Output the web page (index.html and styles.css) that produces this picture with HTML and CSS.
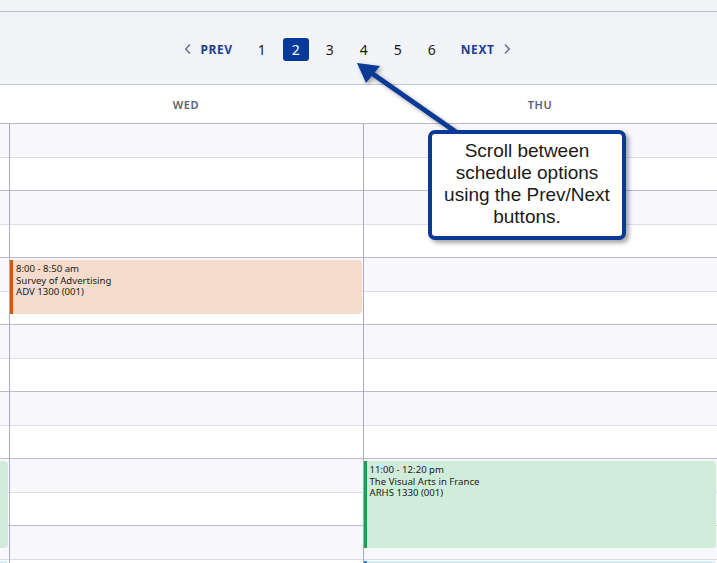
FILE: index.html
```html
<!DOCTYPE html>
<html lang="en">
<head>
    <meta charset="UTF-8">
    <meta name="viewport" content="width=device-width, initial-scale=1.0">
    <title>Schedule Options</title>
    <link rel="stylesheet" href="styles.css">
</head>
<body>
    <div class="top-strip"></div>

    <nav class="pager">
        <button class="pager-step">
            <svg width="8" height="12" viewBox="0 0 8 12"><path d="M6 1.5 1.8 6 6 10.5" fill="none" stroke="#6f7493" stroke-width="1.6"/></svg>
            PREV
        </button>
        <div class="pages">
            <button class="page">1</button>
            <button class="page active">2</button>
            <button class="page">3</button>
            <button class="page">4</button>
            <button class="page">5</button>
            <button class="page">6</button>
        </div>
        <button class="pager-step">
            NEXT
            <svg width="8" height="12" viewBox="0 0 8 12"><path d="M2 1.5 6.2 6 2 10.5" fill="none" stroke="#6f7493" stroke-width="1.6"/></svg>
        </button>
    </nav>

    <div class="day-heads">
        <div class="day-head stub"></div>
        <div class="day-head">WED</div>
        <div class="day-head">THU</div>
    </div>

    <div class="week">
        <div class="day stub">
            <div class="event green" style="top: 337px; height: 87px;"></div>
            <div class="event blue" style="top: 437px; height: 60px;"></div>
        </div>
        <div class="day">
            <div class="event orange" style="top: 136px; height: 54px;">
                <span>8:00 - 8:50 am</span>
                <span>Survey of Advertising</span>
                <span>ADV 1300 (001)</span>
            </div>
        </div>
        <div class="day">
            <div class="event green" style="top: 337px; height: 87px;">
                <span>11:00 - 12:20 pm</span>
                <span>The Visual Arts in France</span>
                <span>ARHS 1330 (001)</span>
            </div>
            <div class="event blue" style="top: 437px; height: 60px;"></div>
        </div>
    </div>

    <!-- tutorial annotation -->
    <svg class="arrow" width="717" height="563">
        <line x1="370" y1="72" x2="456" y2="132" stroke="#0b3a96" stroke-width="5"/>
        <polygon points="357,63 380,66 366,83" fill="#0b3a96"/>
    </svg>
    <div class="callout">Scroll between schedule options using the Prev/Next buttons.</div>
</body>
</html>
```

FILE: styles.css
```css
body {
    margin: 0;
    height: 100vh;
    overflow: hidden;
    font-family: "Noto Sans", Arial, sans-serif;
    background: #ffffff;
    position: relative;
}
.top-strip {
    height: 11px;
    background: #f3f4f8;
    border-bottom: 1px solid #b9bdd0;
}
.pager {
    height: 73px;
    background: #f3f4f8;
    border-bottom: 1px solid #c4c7d6;
    display: flex;
    justify-content: center;
    align-items: center;
    gap: 16px;
    padding-right: 22px;
    padding-top: 2px;
    box-sizing: border-box;
}
.pager-step {
    display: flex;
    align-items: center;
    gap: 8px;
    background: none;
    border: none;
    padding: 0;
    font-family: "Noto Sans", Arial, sans-serif;
    font-size: 12px;
    font-weight: 700;
    letter-spacing: 0.6px;
    color: #1c3f93;
    cursor: pointer;
}
.pages {
    display: flex;
    gap: 8px;
}
.page {
    width: 26px;
    height: 23px;
    background: none;
    border: none;
    border-radius: 3px;
    padding: 0;
    font-family: "Noto Sans", Arial, sans-serif;
    font-size: 14px;
    color: #1a1a1a;
    cursor: pointer;
}
.page.active {
    background: #083a9b;
    color: #ffffff;
}
.day-heads {
    display: flex;
    height: 38px;
    border-bottom: 1px solid #b9bbd0;
}
.day-head {
    width: 354px;
    display: flex;
    justify-content: center;
    align-items: center;
    font-size: 11px;
    font-weight: 600;
    letter-spacing: 0.6px;
    color: #5b6078;
}
.day-head.stub {
    width: 9px;
    flex: none;
}
.week {
    display: flex;
    height: 439px;
    overflow: hidden;
}
.day {
    position: relative;
    width: 353px;
    border-right: 1px solid #a8abc2;
    background: repeating-linear-gradient(to bottom,
        #f8f8fc 0 33px, #dcdde8 33px 34px,
        #ffffff 34px 66px, #b9bbd0 66px 67px);
}
.day.stub {
    width: 9px;
    flex: none;
}
.day:last-child {
    border-right: none;
    width: 354px;
}
.event {
    position: absolute;
    left: 0;
    right: 1px;
    box-sizing: border-box;
    padding: 3px 3px;
    border-left: 3px solid;
    border-radius: 0 4px 4px 0;
    display: flex;
    flex-direction: column;
    font-size: 9.6px;
    line-height: 11.5px;
    color: #1b1b1b;
}
.day.stub .event {
    border-left: none;
    right: 1px;
}
.orange {
    background: #f5dbcc;
    border-color: #d4560f;
}
.green {
    background: #d0ecda;
    border-color: #1f9c4c;
}
.blue {
    background: #d3ecf8;
    border-color: #2a86c8;
}
.arrow {
    position: absolute;
    left: 0;
    top: 0;
    pointer-events: none;
    filter: drop-shadow(2px 2px 2px rgba(0, 0, 0, 0.35));
}
.callout {
    position: absolute;
    left: 428px;
    top: 130px;
    width: 198px;
    height: 110px;
    box-sizing: border-box;
    border: 4px solid #0b3a96;
    border-radius: 7px;
    background: #ffffff;
    box-shadow: 3px 3px 4px rgba(0, 0, 0, 0.35);
    padding: 6px 6px;
    font-family: "Liberation Sans", Arial, sans-serif;
    font-size: 19px;
    line-height: 22px;
    color: #1a1a1a;
    text-align: center;
}
```
